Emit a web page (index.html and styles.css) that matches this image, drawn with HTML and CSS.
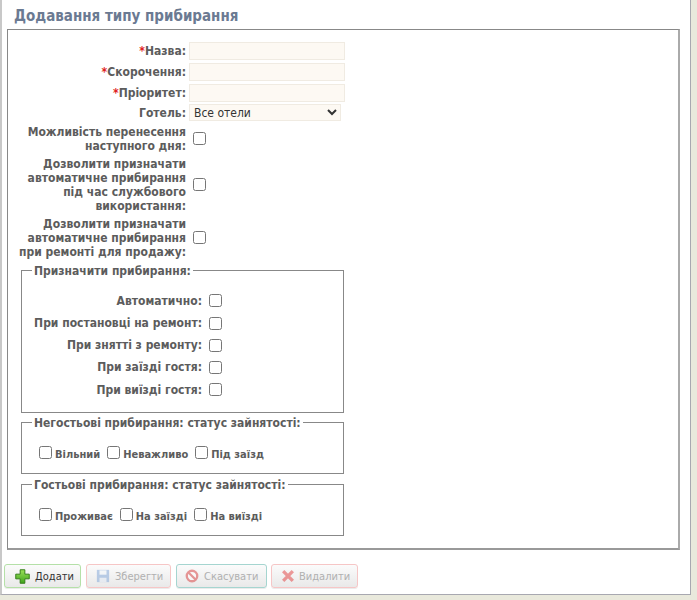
FILE: index.html
```html
<!DOCTYPE html>
<html lang="uk">
<head>
<meta charset="utf-8">
<title>Додавання типу прибирання</title>
<link rel="stylesheet" href="styles.css">
</head>
<body>
<div class="window">
  <h1 class="title">Додавання типу прибирання</h1>
  <form class="panel">
    <div class="rows">
      <label class="lbl"><span class="req">*</span>Назва:</label><input class="field" type="text">
      <label class="lbl"><span class="req">*</span>Скорочення:</label><input class="field" type="text">
      <label class="lbl"><span class="req">*</span>Пріоритет:</label><input class="field" type="text">
      <label class="lbl">Готель:</label><select class="pick"><option>Все отели</option></select>
      <label class="lbl">Можливість перенесення<br>наступного дня:</label><input class="cb cb-row" type="checkbox">
      <label class="lbl">Дозволити призначати<br>автоматичне прибирання<br>під час службового<br>використання:</label><input class="cb cb-row" type="checkbox">
      <label class="lbl">Дозволити призначати<br>автоматичне прибирання<br>при ремонті для продажу:</label><input class="cb cb-row" type="checkbox">
    </div>
    <fieldset class="group group-assign">
      <legend>Призначити прибирання:</legend>
      <div class="assign">
        <label class="lbl">Автоматично:</label><input class="cb" type="checkbox">
        <label class="lbl">При постановці на ремонт:</label><input class="cb" type="checkbox">
        <label class="lbl">При знятті з ремонту:</label><input class="cb" type="checkbox">
        <label class="lbl">При заїзді гостя:</label><input class="cb" type="checkbox">
        <label class="lbl">При виїзді гостя:</label><input class="cb" type="checkbox">
      </div>
    </fieldset>
    <fieldset class="group group-status">
      <legend>Негостьові прибирання: статус зайнятості:</legend>
      <div class="checks">
        <label class="chk"><input class="cb" type="checkbox">Вільний</label>
        <label class="chk"><input class="cb" type="checkbox">Неважливо</label>
        <label class="chk"><input class="cb" type="checkbox">Під заїзд</label>
      </div>
    </fieldset>
    <fieldset class="group group-status">
      <legend>Гостьові прибирання: статус зайнятості:</legend>
      <div class="checks">
        <label class="chk"><input class="cb" type="checkbox">Проживає</label>
        <label class="chk"><input class="cb" type="checkbox">На заїзді</label>
        <label class="chk"><input class="cb" type="checkbox">На виїзді</label>
      </div>
    </fieldset>
  </form>
  <div class="actions">
    <button class="btn btn-add" type="button">
      <svg class="ico ico-add" viewBox="0 0 16 16"><defs><linearGradient id="addfill" x1="0" y1="0" x2="0" y2="1"><stop offset="0" stop-color="#9be05a"/><stop offset="1" stop-color="#3fa51c"/></linearGradient></defs><path d="M5.500 .8h5v4.700h4.700v5h-4.700v4.700h-5v-4.700H.8v-5h4.700z" fill="url(#addfill)" stroke="#2f7a14"/></svg>Додати
    </button>
    <button class="btn btn-save off" type="button">
      <svg class="ico" viewBox="0 0 16 16"><path d="M1 1h14v14H1z" fill="#7da4d8"/><path d="M4 1.500h8v5H4z" fill="#f2f6fb"/><path d="M4 10h8v5H4z" fill="#dfe8f4"/></svg>Зберегти
    </button>
    <button class="btn btn-cancel off" type="button">
      <svg class="ico" viewBox="0 0 16 16"><circle cx="8" cy="8" r="6" fill="#fff" stroke="#d83a3a" stroke-width="2.600"/><path d="M4 4l8 8" stroke="#d83a3a" stroke-width="2.600"/></svg>Скасувати
    </button>
    <button class="btn btn-del off" type="button">
      <svg class="ico" viewBox="0 0 16 16"><path d="M2.500 2.500l11 11M13.500 2.500l-11 11" stroke="#e23c3c" stroke-width="3.800"/></svg>Видалити
    </button>
  </div>
</div>
</body>
</html>
```
FILE: styles.css
```css
html, body {
  margin: 0;
  padding: 0;
  height: 100%;
  background: #e9e9dc;
}
body {
  overflow: hidden;
  font-family: "DejaVu Sans Condensed", "DejaVu Sans", sans-serif;
  font-size: 12px;
  color: #555;
}
.window {
  box-sizing: border-box;
  width: 691px;
  height: 595px;
  padding: 0 0 0 7px;
  background: #fff;
  border-left: 2px solid #c8c8c8;
  border-right: 1px solid #a8a8b0;
  border-bottom: 1px solid #a8a8b0;
}
.title {
  margin: 0;
  height: 29px;
  line-height: 32px;
  padding-left: 5px;
  font-size: 15px;
  font-weight: bold;
  color: #6b7a92;
}
.panel {
  box-sizing: border-box;
  width: 673px;
  height: 521px;
  margin-left: -2px;
  padding: 12px 0 0 13px;
  border: 1px solid #888;
  border-right: 2px solid #aaa;
  border-bottom: 2px solid #999;
}
.rows {
  display: grid;
  grid-template-columns: 165px auto;
  column-gap: 3px;
  justify-content: start;
  justify-items: start;
  align-items: center;
  row-gap: 3px;
}
.lbl {
  font-weight: bold;
  line-height: 14.300px;
  text-align: right;
  justify-self: end;
  white-space: nowrap;
  color: #5c5c5c;
}
.req { color: #e02020; }
.field {
  box-sizing: border-box;
  width: 156px;
  height: 18px;
  margin: 0;
  padding: 0 2px;
  border: 1px solid #f0ebe2;
  background: #fdf9f3;
}
.pick {
  box-sizing: border-box;
  width: 152px;
  height: 17px;
  margin: -1px 0 1px;
  padding: 0;
  border: 1px solid #f0ebe2;
  background: #fdf9f3;
  font-family: "DejaVu Sans Condensed", "DejaVu Sans", sans-serif;
  font-size: 12px;
  color: #333;
}
.cb {
  width: 13px;
  height: 13px;
  margin: 0;
  flex: none;
}
.cb-row { margin: -2px 0 0 4px; }
.group {
  box-sizing: border-box;
  width: 323px;
  margin: 0;
  padding: 0;
  border: 1px solid #888;
  min-width: 0;
}
.group legend {
  margin-left: 10px;
  padding: 0 2px;
  font-weight: bold;
  line-height: 14px;
  color: #5c5c5c;
}
.group-assign {
  height: 149px;
  margin-top: 4px;
}
.assign {
  display: grid;
  grid-template-columns: 180px auto;
  column-gap: 7px;
  justify-content: start;
  align-items: center;
  grid-auto-rows: 22.250px;
  padding-top: 12px;
}
.group-status {
  height: 58px;
  margin-top: 3px;
}
.group-status + .group-status { margin-top: 4px; }
.checks {
  display: flex;
  column-gap: 7px;
  padding: 18px 0 0 17px;
}
.chk {
  display: flex;
  align-items: center;
  column-gap: 3px;
  font-size: 11px;
  font-weight: bold;
  color: #5c5c5c;
}
.chk .cb { position: relative; top: -2px; }
.actions {
  display: flex;
  column-gap: 5px;
  margin: 14px 0 0 -5px;
}
.btn {
  display: flex;
  align-items: center;
  box-sizing: border-box;
  height: 24px;
  padding: 0 0 0 9px;
  column-gap: 5px;
  border: 1px solid;
  border-radius: 3px;
  background: linear-gradient(#fbfbfb, #e9e9e9);
  box-shadow: 0 1px 0 rgba(0, 0, 0, .08);
  font-family: "DejaVu Sans Condensed", "DejaVu Sans", sans-serif;
  font-size: 11px;
  color: #333;
}
.ico { width: 14px; height: 14px; flex: none; }
.ico-add { width: 15px; height: 15px; }
.off { color: #b0b0b0; }
.off .ico { opacity: .5; }
.btn-add { width: 77px; padding-left: 10px; border-color: #b5e0a8; }
.btn-save { width: 85px; border-color: #f6c6c6; }
.btn-cancel { width: 91px; padding-left: 8px; border-color: #a5d5d0; }
.btn-del { width: 87px; margin-left: -1px; column-gap: 4px; border-color: #f6c6c6; }
```
